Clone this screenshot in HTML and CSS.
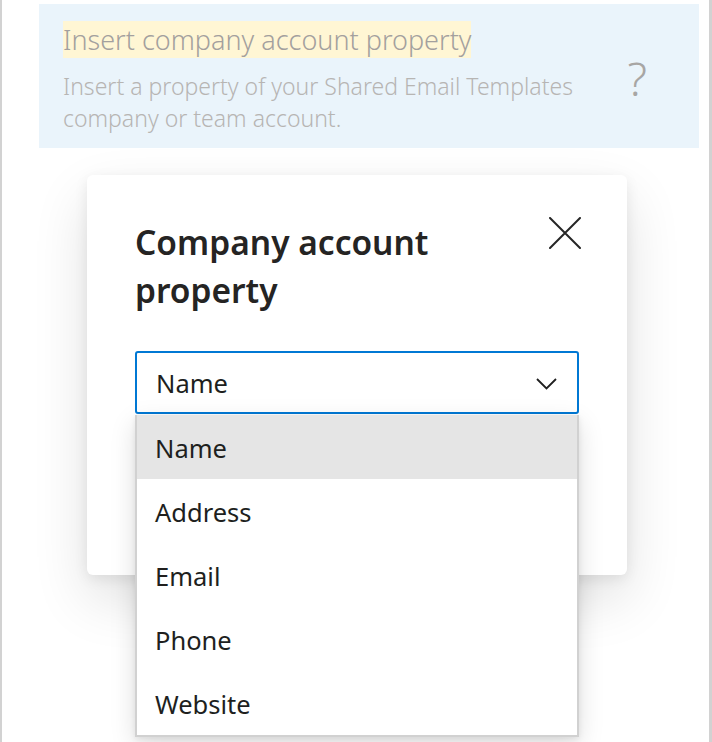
FILE: index.html
```html
<!DOCTYPE html>
<html lang="en">
<head>
<meta charset="utf-8">
<title>Company account property</title>
<link rel="stylesheet" href="styles.css">
</head>
<body>
<div class="frame">
  <section class="banner">
    <div class="banner-text">
      <div class="banner-title"><span class="hl">Insert company account property</span></div>
      <p class="banner-desc">Insert a property of your Shared Email Templates company or team account.</p>
    </div>
    <div class="help">?</div>
  </section>

  <div class="dialog">
    <div class="dialog-head">
      <h2 class="dialog-title">Company account property</h2>
      <button class="close" aria-label="Close">
        <svg width="32" height="32" viewBox="0 0 32 32"><path d="M1 1 L31 31 M31 1 L1 31" stroke="#262626" stroke-width="2" stroke-linecap="round" fill="none"/></svg>
      </button>
    </div>
    <div class="dropdown">
      <div class="select">
        <span>Name</span>
        <svg class="chev" width="21" height="12" viewBox="0 0 21 12"><path d="M1 1 L10.5 10.5 L20 1" stroke="#1f1f1f" stroke-width="1.8" fill="none"/></svg>
      </div>
      <ul class="listbox">
        <li class="opt selected">Name</li>
        <li class="opt">Address</li>
        <li class="opt">Email</li>
        <li class="opt">Phone</li>
        <li class="opt">Website</li>
      </ul>
    </div>
  </div>
</div>
</body>
</html>
```

FILE: styles.css
```css
html, body {
  margin: 0;
  padding: 0;
  background: #ffffff;
}
body {
  font-family: "Noto Sans", "Open Sans", sans-serif;
  color: #201f1e;
}
.frame {
  box-sizing: border-box;
  width: 712px;
  height: 742px;
  border-left: 2px solid #d2d2d2;
  border-right: 3px solid #d2d2d2;
  padding-top: 4px;
  overflow: hidden;
}
.banner {
  box-sizing: border-box;
  margin-left: 37px;
  width: 660px;
  height: 144px;
  background: #eaf4fb;
  padding: 17px 24px 0 24px;
  display: flex;
  align-items: flex-start;
}
.banner-text {
  flex: 1;
}
.banner-title {
  font-size: 27px;
  font-weight: 300;
  line-height: 37px;
  color: #a3a09e;
}
.hl {
  background: #fff6d4;
}
.banner-desc {
  margin: 12px 0 0 0;
  font-size: 23px;
  font-weight: 300;
  line-height: 32px;
  color: #b7b5b3;
  max-width: 545px;
}
.help {
  font-size: 46px;
  font-weight: 300;
  color: #a8a6a4;
  line-height: 46px;
  margin: 34px 28px 0 0;
}
.dialog {
  box-sizing: border-box;
  position: relative;
  margin: 27px 0 0 85px;
  width: 540px;
  height: 400px;
  background: #ffffff;
  border-radius: 6px;
  box-shadow: 0 24px 56px rgba(0, 0, 0, 0.12), 0 4px 14px rgba(0, 0, 0, 0.08);
  padding: 42px 48px 0 48px;
}
.dialog-head {
  display: flex;
  justify-content: space-between;
  align-items: flex-start;
}
.dialog-title {
  margin: 0;
  padding-top: 1px;
  font-size: 33.5px;
  font-weight: 600;
  line-height: 48px;
  color: #252423;
  width: 340px;
}
.close {
  width: 32px;
  height: 32px;
  padding: 0;
  margin: 0 -2px 0 0;
  border: none;
  background: none;
}
.close svg {
  display: block;
}
.dropdown {
  position: relative;
  margin-top: 37px;
}
.select {
  box-sizing: border-box;
  height: 63px;
  border: 2px solid #0078d4;
  border-radius: 3px;
  display: flex;
  align-items: center;
  justify-content: space-between;
  padding: 0 20px 0 19px;
  font-size: 25.5px;
  color: #201f1e;
}
.chev {
  display: block;
  margin-top: 2px;
}
.listbox {
  position: absolute;
  z-index: 5;
  top: 64px;
  left: 0;
  width: 444px;
  box-sizing: border-box;
  margin: 0;
  padding: 0;
  list-style: none;
  background: #ffffff;
  border: 2px solid #d1d1d1;
  border-top: none;
  box-shadow: 0 8px 24px rgba(0, 0, 0, 0.13), 0 2px 6px rgba(0, 0, 0, 0.08);
}
.opt {
  height: 64px;
  display: flex;
  align-items: center;
  padding-left: 18px;
  padding-top: 2px;
  box-sizing: border-box;
  font-size: 25.5px;
  color: #201f1e;
}
.opt.selected {
  background: #e5e5e5;
}
```
